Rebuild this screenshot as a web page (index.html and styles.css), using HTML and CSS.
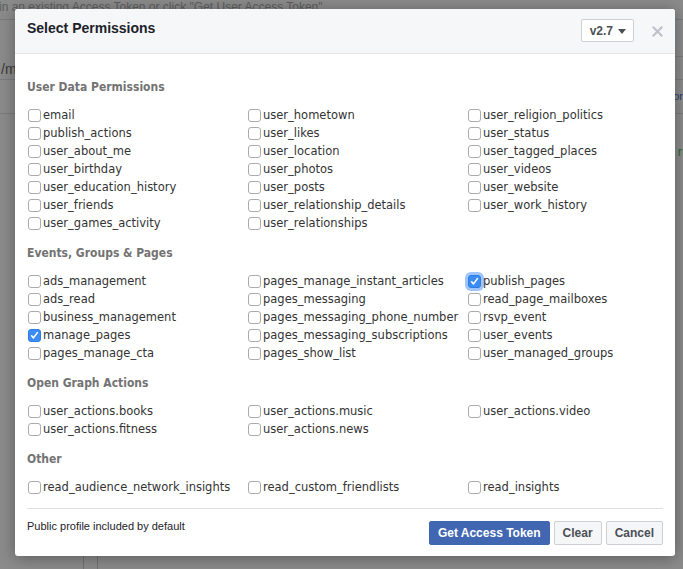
FILE: index.html
```html
<!DOCTYPE html>
<html>
<head>
<meta charset="utf-8">
<link rel="stylesheet" href="styles.css">
</head>
<body>
<div class="page">
  <div class="p-top"><span class="p-hint">in an existing Access Token or click "Get User Access Token"</span></div>
  <div class="p-row1"></div>
  <div class="p-row2"><span class="p-path">/m</span></div>
  <div class="p-row3"><span class="p-blue">or</span></div>
  <div class="p-row4"><span class="p-green">r</span></div>
  <div class="p-cols"><div class="p-col"></div></div>
</div>

<div class="modal">
  <div class="m-head">
    <div class="m-title">Select Permissions</div>
    <div class="ver">v2.7<span class="caret"></span></div>
    <div class="close"><svg width="11" height="11" viewBox="0 0 11 11"><path d="M1.5 1.5L9.5 9.5M9.5 1.5L1.5 9.5" stroke="#bec2c9" stroke-width="2.2" stroke-linecap="square"/></svg></div>
  </div>
  <div class="m-body">
    <div class="sec">
      <div class="sec-h">User Data Permissions</div>
      <div class="grid">
        <div class="it"><span class="cb"></span>email</div>
        <div class="it"><span class="cb"></span>user_hometown</div>
        <div class="it"><span class="cb"></span>user_religion_politics</div>
        <div class="it"><span class="cb"></span>publish_actions</div>
        <div class="it"><span class="cb"></span>user_likes</div>
        <div class="it"><span class="cb"></span>user_status</div>
        <div class="it"><span class="cb"></span>user_about_me</div>
        <div class="it"><span class="cb"></span>user_location</div>
        <div class="it"><span class="cb"></span>user_tagged_places</div>
        <div class="it"><span class="cb"></span>user_birthday</div>
        <div class="it"><span class="cb"></span>user_photos</div>
        <div class="it"><span class="cb"></span>user_videos</div>
        <div class="it"><span class="cb"></span>user_education_history</div>
        <div class="it"><span class="cb"></span>user_posts</div>
        <div class="it"><span class="cb"></span>user_website</div>
        <div class="it"><span class="cb"></span>user_friends</div>
        <div class="it"><span class="cb"></span>user_relationship_details</div>
        <div class="it"><span class="cb"></span>user_work_history</div>
        <div class="it"><span class="cb"></span>user_games_activity</div>
        <div class="it"><span class="cb"></span>user_relationships</div>
      </div>
    </div>
    <div class="sec">
      <div class="sec-h">Events, Groups &amp; Pages</div>
      <div class="grid">
        <div class="it"><span class="cb"></span>ads_management</div>
        <div class="it"><span class="cb"></span>pages_manage_instant_articles</div>
        <div class="it"><span class="cb on focus"><svg width="9" height="9" viewBox="0 0 9 9"><path d="M1.6 4.8L3.5 6.9L7.4 1.6" fill="none" stroke="#fff" stroke-width="1.6" stroke-linecap="round" stroke-linejoin="round"/></svg></span>publish_pages</div>
        <div class="it"><span class="cb"></span>ads_read</div>
        <div class="it"><span class="cb"></span>pages_messaging</div>
        <div class="it"><span class="cb"></span>read_page_mailboxes</div>
        <div class="it"><span class="cb"></span>business_management</div>
        <div class="it"><span class="cb"></span>pages_messaging_phone_number</div>
        <div class="it"><span class="cb"></span>rsvp_event</div>
        <div class="it"><span class="cb on"><svg width="9" height="9" viewBox="0 0 9 9"><path d="M1.6 4.8L3.5 6.9L7.4 1.6" fill="none" stroke="#fff" stroke-width="1.6" stroke-linecap="round" stroke-linejoin="round"/></svg></span>manage_pages</div>
        <div class="it"><span class="cb"></span>pages_messaging_subscriptions</div>
        <div class="it"><span class="cb"></span>user_events</div>
        <div class="it"><span class="cb"></span>pages_manage_cta</div>
        <div class="it"><span class="cb"></span>pages_show_list</div>
        <div class="it"><span class="cb"></span>user_managed_groups</div>
      </div>
    </div>
    <div class="sec">
      <div class="sec-h">Open Graph Actions</div>
      <div class="grid">
        <div class="it"><span class="cb"></span>user_actions.books</div>
        <div class="it"><span class="cb"></span>user_actions.music</div>
        <div class="it"><span class="cb"></span>user_actions.video</div>
        <div class="it"><span class="cb"></span>user_actions.fitness</div>
        <div class="it"><span class="cb"></span>user_actions.news</div>
      </div>
    </div>
    <div class="sec">
      <div class="sec-h">Other</div>
      <div class="grid">
        <div class="it"><span class="cb"></span>read_audience_network_insights</div>
        <div class="it"><span class="cb"></span>read_custom_friendlists</div>
        <div class="it"><span class="cb"></span>read_insights</div>
      </div>
    </div>
    <div class="m-foot">
      <div class="note">Public profile included by default</div>
      <div class="btns">
        <div class="btn primary">Get Access Token</div>
        <div class="btn">Clear</div>
        <div class="btn">Cancel</div>
      </div>
    </div>
  </div>
</div>
</body>
</html>
```

FILE: styles.css
```css
html, body {
  margin: 0;
  padding: 0;
}
body {
  width: 683px;
  height: 569px;
  overflow: hidden;
  background: #8b8b8b;
  font-family: "Liberation Sans", Arial, sans-serif;
  position: relative;
}

/* underlying page (dimmed) */
.page {
  width: 683px;
  height: 569px;
  display: flex;
  flex-direction: column;
}
.p-top {
  height: 20px;
  border-bottom: 1px solid #7b7b7b;
  box-sizing: border-box;
  overflow: hidden;
}
.p-hint {
  display: block;
  margin-left: -1px;
  margin-top: -1px;
  font-size: 12px;
  line-height: 16px;
  color: #5e5e5e;
}
.p-row1 {
  height: 37px;
  margin-left: 600px;
  border-bottom: 1px solid #7b7b7b;
  box-sizing: border-box;
}
.p-row2 {
  height: 23px;
  border-bottom: 1px solid #7b7b7b;
  box-sizing: border-box;
  display: flex;
  align-items: center;
}
.p-path {
  font-size: 14px;
  color: #3a3a3a;
  margin-left: 1px;
  margin-top: 2px;
}
.p-row3 {
  height: 34px;
  border-bottom: 1px solid #7b7b7b;
  box-sizing: border-box;
  display: flex;
  justify-content: flex-end;
  align-items: center;
}
.p-blue {
  font-size: 11px;
  color: #2c3f66;
  margin-right: 0;
  margin-top: -1px;
}
.p-row4 {
  height: 80px;
  display: flex;
  justify-content: flex-end;
  align-items: center;
}
.p-green {
  font-size: 13px;
  color: #2a6a2a;
  margin-right: 1px;
  margin-top: -5px;
}
.p-cols {
  flex: 1;
  padding-left: 83px;
}
.p-col {
  width: 13px;
  height: 100%;
  border-left: 1px solid #727272;
  border-right: 1px solid #727272;
}

/* modal */
.modal {
  position: absolute;
  left: 15px;
  top: 9px;
  width: 660px;
  height: 547px;
  background: #fff;
  border-radius: 3px;
  box-shadow: 0 2px 16px rgba(0, 0, 0, 0.35);
  overflow: hidden;
}
.m-head {
  height: 45px;
  box-sizing: border-box;
  background: #f6f7f9;
  border-bottom: 1px solid #e5e5e5;
  display: flex;
  align-items: flex-start;
  padding: 10px 12px 0 12px;
}
.m-title {
  font-weight: bold;
  font-size: 14px;
  line-height: 18px;
  color: #1d2129;
  flex: 1;
}
.ver {
  height: 23px;
  box-sizing: border-box;
  border: 1px solid #ccd0d5;
  border-radius: 2px;
  background: #fff;
  padding: 0 7px 0 8px;
  display: flex;
  align-items: center;
  font-weight: bold;
  font-size: 12px;
  color: #4b4f56;
}
.caret {
  width: 0;
  height: 0;
  border-left: 4px solid transparent;
  border-right: 4px solid transparent;
  border-top: 5px solid #4b4f56;
  margin-left: 5px;
  margin-top: 1px;
}
.close {
  width: 11px;
  height: 11px;
  margin-left: 18px;
  margin-top: 7px;
  display: flex;
}

.m-body {
  padding: 24px 12px 11px 12px;
}
.sec {
  margin-bottom: 12px;
}
.sec:last-of-type {
  margin-bottom: 0;
}
.sec-h {
  font-family: "DejaVu Sans Condensed", "DejaVu Sans", sans-serif;
  font-weight: bold;
  font-size: 12px;
  line-height: 18px;
  color: #737373;
  margin-bottom: 10px;
}
.grid {
  display: grid;
  grid-template-columns: 220px 220px 1fr;
}
.it {
  height: 18px;
  display: flex;
  align-items: center;
  font-family: "DejaVu Sans", sans-serif;
  font-size: 11.5px;
  color: #333;
  white-space: nowrap;
}
.cb {
  width: 13px;
  height: 13px;
  box-sizing: border-box;
  border: 1px solid #ababab;
  border-radius: 3px;
  background: #fff;
  margin-left: 1px;
  margin-right: 2px;
  flex: none;
  display: flex;
  align-items: center;
  justify-content: center;
}
.cb.on {
  background: #3b8df5;
  border-color: #2f7de0;
}
.cb.focus {
  box-shadow: 0 0 0 3px rgba(80, 150, 250, 0.55);
}

.m-foot {
  border-top: 1px solid #dddfe2;
  margin-top: 12px;
  padding-top: 12px;
  display: flex;
  justify-content: space-between;
  align-items: flex-start;
}
.note {
  font-size: 11px;
  line-height: 12px;
  color: #1d2129;
  margin-top: -1px;
}
.btns {
  display: flex;
  gap: 4px;
}
.btn {
  height: 24px;
  box-sizing: border-box;
  padding: 0 8px;
  border: 1px solid #ccd0d5;
  border-radius: 2px;
  background: #f5f6f7;
  color: #4b4f56;
  font-weight: bold;
  font-size: 12px;
  line-height: 22px;
}
.btn.primary {
  background: #4267b2;
  border-color: #4267b2;
  color: #fff;
}
```
